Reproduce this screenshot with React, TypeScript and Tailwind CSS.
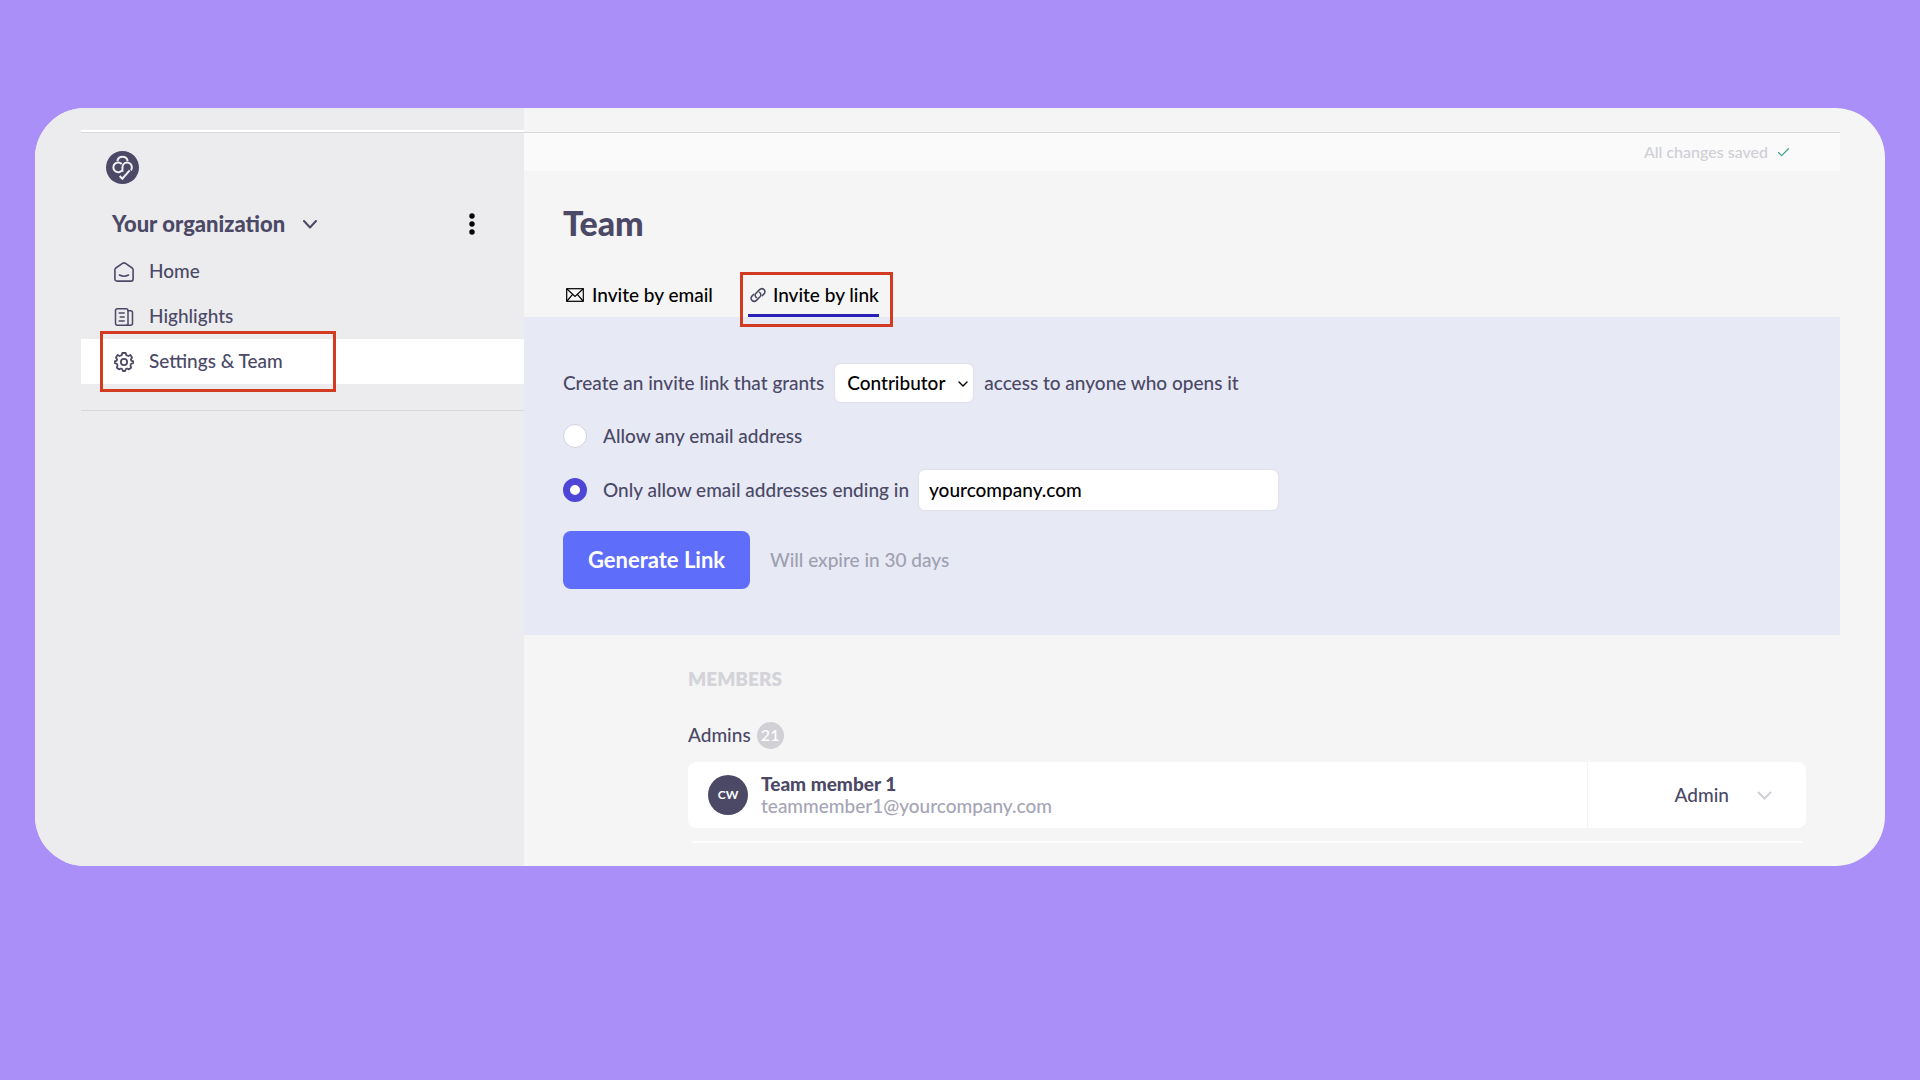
import { useState } from 'react'
import type { ReactNode } from 'react'
import { Check, ChevronDown } from 'lucide-react'

type Tab = 'email' | 'link'
type Access = 'any' | 'domain'

interface Member {
  initials: string
  name: string
  email: string
  role: string
}

const members: Member[] = [
  { initials: 'CW', name: 'Team member 1', email: 'teammember1@yourcompany.com', role: 'Admin' },
]

function Logo() {
  return (
    <svg width="33" height="33" viewBox="0 0 99 99" fill="none" aria-label="Logo">
      <circle cx="49.5" cy="49.5" r="49.5" fill="#4b4966" />
      <g stroke="#f1f1f5" strokeWidth="6">
        <path d="M34 30C36 21 42 17.500 49.500 17.500S63 21 65 30" />
        <path d="M47 39A14.500 14.500 0 1 0 48 58" />
        <path d="M50 62C49 58 49 54 49.500 48.500A14 14 0 0 1 77.500 48.500C77.500 52 77 55 75 58" />
        <path d="M41 75L49 83L71 58" />
      </g>
    </svg>
  )
}

function HomeIcon() {
  return (
    <svg width="20" height="20" viewBox="0 0 20 20" fill="none" stroke="currentColor" strokeWidth="1.600" strokeLinejoin="round" strokeLinecap="round">
      <path d="M.9 7.800C.9 7 1.200 6.500 1.800 6L8.800 1.200C9.600.7 10.400.7 11.200 1.200L18.200 6C18.800 6.500 19.100 7 19.100 7.800V17C19.100 18.300 18.300 19.100 17 19.100H3C1.700 19.100.9 18.300.9 17Z" />
      <path d="M5.500 13C8 14.400 12 14.400 14.500 13" />
    </svg>
  )
}

function HighlightsIcon() {
  return (
    <svg width="20" height="20" viewBox="0 0 20 20" fill="none" stroke="currentColor" strokeWidth="1.500" strokeLinejoin="round" strokeLinecap="round">
      <path d="M3.500 1.700H12C13.300 1.700 14 2.400 14 3.700V18.300H3.500C2.200 18.300 1.500 17.600 1.500 16.300V3.700C1.500 2.400 2.200 1.700 3.500 1.700Z" />
      <path d="M14 3.700H16.500C17.800 3.700 18.500 4.400 18.500 5.700V16.300C18.500 17.600 17.800 18.300 16.500 18.300H12.500" />
      <path d="M5.200 6H10.200M6.200 10H10.200M5.200 14H10.200" />
    </svg>
  )
}

function SettingsIcon() {
  return (
    <svg width="20" height="20" viewBox="0 0 20 20" fill="none" stroke="currentColor" strokeWidth="1.800" strokeLinejoin="round">
      <path d="M8.300 1H11.700L12.300 3.200L14.300 4L16.400 3L18 5.500L16.900 7.700L17.300 8.600L19.200 9.300V11L17 12L16.500 13.300L17.100 15.700L15 17.300L13.100 16.500L11.900 17L11.100 19H8.900L8.100 17L6.900 16.500L4.900 17.300L2.900 15.700L3.500 13.300L3 12L.8 11V9.300L2.700 8.600L3.100 7.700L2 5.500L3.600 3L5.700 4L7.700 3.200Z" />
      <circle cx="10" cy="10" r="3.100" />
    </svg>
  )
}

function MailIcon() {
  return (
    <svg width="18" height="14" viewBox="0 0 18 14" fill="none" stroke="currentColor" strokeWidth="1.200">
      <rect x=".7" y=".7" width="16.600" height="12.600" />
      <path d="M1 1L9 8.500L17 1M1 13L6.600 6.400M17 13L11.400 6.400" />
    </svg>
  )
}

function LinkIcon() {
  return (
    <svg width="16" height="16" viewBox="0 0 16 16" fill="none" stroke="#4b4966" strokeWidth="1.500" strokeLinecap="round">
      <path d="M6.600 10.700C5 9.800 4.600 7.700 6 6.200L9.300 2.900C10.700 1.500 12.700 1.400 14 2.600C15.200 3.900 15.100 5.800 13.800 7.100L12.200 8.700" />
      <path d="M9.400 5.300C11 6.200 11.400 8.300 10 9.800L6.700 13.100C5.300 14.500 3.300 14.600 2 13.400C.8 12.100.9 10.200 2.200 8.900L3.800 7.300" />
    </svg>
  )
}

function DotsIcon() {
  return (
    <svg width="6" height="22" viewBox="0 0 6 22" fill="#000">
      <circle cx="3" cy="3" r="2.700" />
      <circle cx="3" cy="11" r="2.700" />
      <circle cx="3" cy="19" r="2.700" />
    </svg>
  )
}

interface NavItemProps {
  icon: ReactNode
  label: string
  active?: boolean
}

function NavItem({ icon, label, active }: NavItemProps) {
  return (
    <li className={active ? 'relative bg-white' : 'relative'}>
      <a href="#" className="flex h-[45px] items-center gap-[15px] pl-[33px]">
        {icon}
        <span className="pb-0.5">{label}</span>
      </a>
      {active && <div className="pointer-events-none absolute -top-2 left-[19px] h-[61px] w-[236px] border-3 border-[#d23a22]" />}
    </li>
  )
}

function Sidebar() {
  return (
    <aside className="w-[489px] shrink-0 bg-[#ececee] pt-[22px] pl-[46px]">
      <div className="border-t-2 border-white" />
      <div className="border-t border-[#d8d8dc] pt-[18px]">
        <div className="pl-[25px]">
          <Logo />
        </div>
        <div className="mt-[22px] flex h-9 items-center justify-between pr-[49px] pl-[31px]">
          <button className="flex items-center gap-[18px] text-[22px] font-black">
            Your organization
            <svg width="14" height="9" viewBox="0 0 14 9" fill="none" stroke="currentColor" strokeWidth="2" strokeLinecap="round" strokeLinejoin="round">
              <path d="M1 1L7 7.500L13 1" />
            </svg>
          </button>
          <button aria-label="More options">
            <DotsIcon />
          </button>
        </div>
        <ul className="mt-[7px]">
          <NavItem icon={<HomeIcon />} label="Home" />
          <NavItem icon={<HighlightsIcon />} label="Highlights" />
          <NavItem icon={<SettingsIcon />} label="Settings & Team" active />
        </ul>
        <div className="mt-[26px] border-t border-[#d8d8dc]" />
      </div>
    </aside>
  )
}

function InviteByLink() {
  const [access, setAccess] = useState<Access>('domain')
  const [role, setRole] = useState('Contributor')
  const [domain, setDomain] = useState('yourcompany.com')

  const radio =
    'size-6 shrink-0 appearance-none rounded-full border border-[#d2d2e0] bg-white checked:border-7 checked:border-[#4f46d8]'

  return (
    <section className="bg-[#e7e9f5] py-[46px] pl-[39px]">
      <div className="flex h-10 items-center gap-[11px]">
        <label htmlFor="role">Create an invite link that grants</label>
        <div className="relative">
          <select
            id="role"
            value={role}
            onChange={e => setRole(e.target.value)}
            className="block h-[38px] w-[138px] appearance-none rounded-md bg-white pl-3 text-black shadow-[0_0_2px_1px_#e0e0ea]"
          >
            <option>Contributor</option>
            <option>Admin</option>
          </select>
          <ChevronDown className="pointer-events-none absolute top-3 right-0.5 text-black" size={16} />
        </div>
        <span>access to anyone who opens it</span>
      </div>

      <div className="mt-[13px] flex h-10 items-center gap-4">
        <input id="any" type="radio" name="access" className={radio} checked={access === 'any'} onChange={() => setAccess('any')} />
        <label htmlFor="any">Allow any email address</label>
      </div>

      <div className="mt-[14px] flex h-10 items-center">
        <input id="domain" type="radio" name="access" className={radio} checked={access === 'domain'} onChange={() => setAccess('domain')} />
        <label htmlFor="domain" className="ml-4">Only allow email addresses ending in</label>
        <input
          type="text"
          aria-label="Email domain"
          value={domain}
          onChange={e => setDomain(e.target.value)}
          className="ml-[10px] h-10 w-[359px] rounded-md bg-white px-[10px] pb-0.5 text-black shadow-[0_0_2px_1px_#e0e0ea]"
        />
      </div>

      <div className="mt-[21px] flex items-center gap-5">
        <button className="h-[58px] w-[187px] rounded-lg bg-[#5f6dfb] text-[22px] font-bold text-white">Generate Link</button>
        <span className="text-[#9fa0b0]">Will expire in 30 days</span>
      </div>
    </section>
  )
}

function MemberRow({ member }: { member: Member }) {
  return (
    <li className="flex h-[66px] items-stretch rounded-lg bg-white">
      <div className="flex flex-1 items-center gap-[13px] pl-5">
        <div className="flex size-10 items-center justify-center rounded-full bg-[#4b4966] text-xs font-bold text-white">
          {member.initials}
        </div>
        <div className="leading-[22px]">
          <p className="font-black">{member.name}</p>
          <p className="text-[#a5a5b5]">{member.email}</p>
        </div>
      </div>
      <button className="flex w-[219px] items-center justify-end gap-7 border-l border-[#f4f4f5] pr-[34px]">
        {member.role}
        <svg width="15" height="9" viewBox="0 0 15 9" fill="none" stroke="#cfcfd6" strokeWidth="2">
          <path d="M1 1L7.500 7.500L14 1" />
        </svg>
      </button>
    </li>
  )
}

export default function App() {
  const [tab, setTab] = useState<Tab>('link')

  return (
    <div className="min-h-screen bg-[#a98ff7] px-[35px] pt-[108px] font-['Lato',sans-serif] text-[19px] leading-7 font-medium text-[#4b4966]">
      <div className="flex overflow-hidden rounded-[50px] bg-[#f5f5f5]">
        <Sidebar />

        <main className="min-w-0 flex-1 pt-6 pr-[45px] pb-[23px]">
          <div className="flex h-[39px] items-center justify-end gap-2 border-t border-[#d8d8dc] bg-[#fafafa] pr-[49px] text-base text-[#cfcfd6]">
            All changes saved
            <Check size={15} className="text-[#3fa58f]" />
          </div>

          <h1 className="mt-[31px] pl-[39px] text-[34px] leading-[42px] font-black">Team</h1>

          <div className="mt-[30px] flex h-[43px] items-stretch gap-[35px] pl-[39px] text-black">
            <button onClick={() => setTab('email')} className="flex items-center gap-2 border-b-3 border-transparent pt-0.5 pl-[3px]">
              <MailIcon />
              Invite by email
            </button>
            <button onClick={() => setTab('link')} className="relative flex items-center gap-[7px] border-b-3 border-[#2a20b8] pt-0.5 pl-0.5">
              <LinkIcon />
              Invite by link
              <div className="pointer-events-none absolute -top-0.5 -right-3.5 -bottom-[13px] -left-2 border-3 border-[#d23a22]" />
            </button>
          </div>

          {tab === 'link' && <InviteByLink />}

          <section className="pt-7 pr-[34px] pl-[164px]">
            <h2 className="leading-8 font-extrabold text-[#d3d3d9]">MEMBERS</h2>
            <h3 className="mt-[26px] flex h-7 items-center gap-1.5">
              Admins
              <span className="flex size-[27px] items-center justify-center rounded-full bg-[#d0d0d5] text-base text-white">21</span>
            </h3>
            <ul className="mt-[13px]">
              {members.map(m => (
                <MemberRow key={m.email} member={m} />
              ))}
            </ul>
            <div className="mx-1 mt-[13px] border-t-2 border-[#fdfdfd]" />
          </section>
        </main>
      </div>
    </div>
  )
}
